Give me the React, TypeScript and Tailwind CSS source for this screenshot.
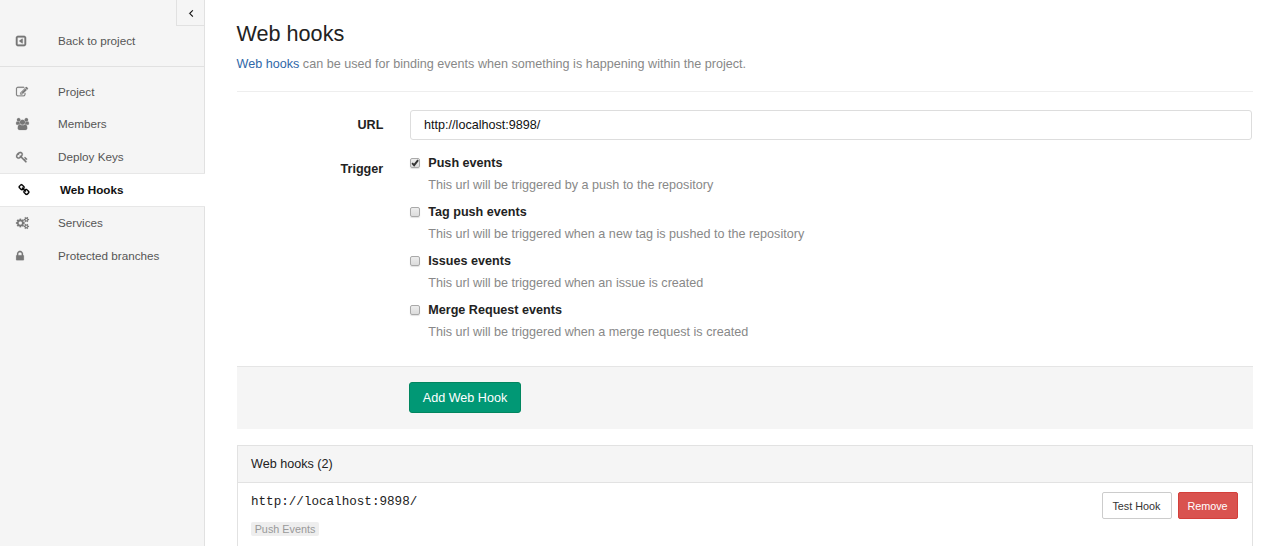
import React from 'react';

type IconProps = { d: string; wide?: boolean; className?: string };

function Icon({ d, wide, className = '' }: IconProps) {
  return (
    <svg
      viewBox={wide ? '0 0 1920 1792' : '0 0 1792 1792'}
      className={`h-[12px] shrink-0 overflow-visible ${wide ? 'w-[13px]' : 'w-[12px]'} ${className}`}
      fill="currentColor"
      stroke="currentColor"
      strokeWidth="30"
      aria-hidden="true"
    >
      <path d={d} />
    </svg>
  );
}

const backIcon =
  'M1152 608v576q0 26-19 45t-45 19q-20 0-37-12l-403-288q-27-19-27-52t27-52l403-288q17-12 37-12 26 0 45 19t19 45zM1408 1376v-960q0-13-9.500-22.500t-22.500-9.500h-960q-13 0-22.500 9.500t-9.500 22.500v960q0 13 9.500 22.500t22.500 9.500h960q13 0 22.500-9.500t9.500-22.500zm256-960v960q0 119-84.500 203.500t-203.500 84.500h-960q-119 0-203.500-84.500t-84.500-203.500v-960q0-119 84.500-203.500t203.500-84.500h960q119 0 203.500 84.500t84.500 203.500z';
const angleLeft =
  'M1203 544q0 13-10 23l-393 393 393 393q10 10 10 23t-10 23l-50 50q-10 10-23 10t-23-10l-466-466q-10-10-10-23t10-23l466-466q10-10 23-10t23 10l50 50q10 10 10 23z';
const editIcon =
  'M888 1184l116-116-152-152-116 116v56h96v96h56zm440-720q-16-16-33 1l-350 350q-17 17-1 33t33-1l350-350q17-17 1-33zm80 594v190q0 119-84.500 203.500t-203.500 84.500h-832q-119 0-203.500-84.500t-84.500-203.500v-832q0-119 84.500-203.500t203.500-84.500h832q63 0 117 25 15 7 18 23 3 17-9 29l-49 49q-14 14-32 8-23-6-45-6h-832q-66 0-113 47t-47 113v832q0 66 47 113t113 47h832q66 0 113-47t47-113v-126q0-13 9-22l64-64q15-15 35-7t20 29zm-96-738l288 288-672 672h-288v-288zm444 132l-92 92-288-288 92-92q28-28 68-28t68 28l152 152q28 28 28 68t-28 68z';
const usersIcon =
  'M593 896q-162 5-265 128h-134q-82 0-138-40.500t-56-118.500q0-353 124-353 6 0 43.500 21t97.500 42.500 119 21.500q67 0 133-23-5 37-5 66 0 139 81 256zm1071 637q0 120-73 189.500t-194 69.500h-874q-121 0-194-69.500t-73-189.500q0-53 3.500-103.500t14-109 26.500-108.500 43-97.500 62-81 85.500-53.500 111.500-20q10 0 43 21.500t73 48 107 48 135 21.500 135-21.500 107-48 73-48 43-21.500q61 0 111.500 20t85.500 53.500 62 81 43 97.500 26.500 108.500 14 109 3.500 103.500zm-1024-1277q0 106-75 181t-181 75-181-75-75-181 75-181 181-75 181 75 75 181zm704 384q0 159-112.500 271.500t-271.500 112.500-271.500-112.500-112.500-271.500 112.500-271.500 271.500-112.500 271.500 112.500 112.500 271.500zm576 225q0 78-56 118.500t-138 40.500h-134q-103-123-265-128 81-117 81-256 0-29-5-66 66 23 133 23 59 0 119-21.500t97.500-42.500 43.500-21q124 0 124 353zm-128-609q0 106-75 181t-181 75-181-75-75-181 75-181 181-75 181 75 75 181z';
const keyIcon =
  'M832 512q0-80-56-136t-136-56-136 56-56 136q0 42 19 83-41-19-83-19-80 0-136 56t-56 136 56 136 136 56 136-56 56-136q0-42-19-83 41 19 83 19 80 0 136-56t56-136zm851 704q0 17-49 66t-66 49q-9 0-28.500-16t-36.500-33-38.500-40-24.500-26l-96 96 220 220q28 28 28 68 0 42-39 81t-81 39q-40 0-68-28l-671-671q-176 131-365 131-163 0-265.500-102.500t-102.500-265.500q0-160 95-313t248-248 313-95q163 0 265.500 102.500t102.500 265.500q0 189-131 365l355 355 96-96q-3-3-26-24.500t-40-38.500-33-36.500-16-28.500q0-17 49-66t66-49q13 0 23 10 6 6 46 44.500t82 79.500 86.500 86 73 78 28.500 41z';
const linkIcon =
  'M1520 1216q0-40-28-68l-208-208q-28-28-68-28-42 0-72 32 3 3 19 18.500t21.500 21.500 15 19 13 25.500 3.500 27.500q0 40-28 68t-68 28q-15 0-27.500-3.500t-25.500-13-19-15-21.500-21.500-18.500-19q-33 31-33 73 0 40 28 68l206 207q27 27 68 27 40 0 68-26l147-146q28-28 28-67zm-703-705q0-40-28-68l-206-207q-28-28-68-28-39 0-68 27l-147 146q-28 28-28 67 0 40 28 68l208 208q27 27 68 27 42 0 72-31-3-3-19-18.500t-21.500-21.500-15-19-13-25.500-3.500-27.500q0-40 28-68t68-28q15 0 27.500 3.500t25.500 13 19 15 21.500 21.500 18.500 19q33-31 33-73zm895 705q0 120-85 203l-147 146q-83 83-203 83-121 0-204-85l-206-207q-83-83-83-203 0-123 88-209l-88-88q-86 88-208 88-120 0-204-84l-208-208q-84-84-84-204t85-203l147-146q83-83 203-83 121 0 204 85l206 207q83 83 83 203 0 123-88 209l88 88q86-88 208-88 120 0 204 84l208 208q84 84 84 204z';
const smallCog =
  'v140q0 16-149 31-12 27-30 52 51 113 51 138 0 4-4 7-122 71-124 71-8 0-46-47t-52-68q-20 2-30 2t-30-2q-14 21-52 68t-46 47q-2 0-124-71-4-3-4-7 0-25 51-138-18-25-30-52-149-15-149-31v-140q0-16 149-31 13-29 30-52-51-113-51-138 0-4 4-7 4-2 35-20t59-34 30-16q8 0 46 46.500t52 67.500q20-2 30-2t30 2q51-71 92-112l6-2q4 0 124 70 4 3 4 7 0 25-51 138 17 23 30 52 149 15 149 31z';
const cogsIcon =
  'M896 896q0-106-75-181t-181-75-181 75-75 181 75 181 181 75 181-75 75-181zm768 512q0-52-38-90t-90-38-90 38-38 90q0 53 37.500 90.500t90.500 37.500 90.500-37.500 37.500-90.500zm0-1024q0-52-38-90t-90-38-90 38-38 90q0 53 37.500 90.500t90.500 37.500 90.500-37.500 37.500-90.500zm-384 421v185q0 10-7 19.500t-16 10.500l-155 24q-11 35-32 76 34 48 90 115 7 11 7 20 0 12-7 19-23 30-82.500 89.500t-78.500 59.500q-11 0-21-7l-115-90q-37 19-77 31-11 108-23 155-7 24-30 24h-186q-11 0-20-7.500t-10-17.500l-23-153q-34-10-75-31l-118 89q-7 7-20 7-11 0-21-8-144-133-144-160 0-9 7-19 10-14 41-53t47-61q-23-44-35-82l-152-24q-10-1-17-9.500t-7-19.500v-185q0-10 7-19.500t16-10.500l155-24q11-35 32-76-34-48-90-115-7-11-7-20 0-12 7-20 22-30 82-89t79-59q11 0 21 7l115 90q34-18 77-32 11-108 23-154 7-24 30-24h186q11 0 20 7.500t10 17.500l23 153q34 10 75 31l118-89q8-7 20-7 11 0 21 8 144 133 144 160 0 8-7 19-12 16-42 54t-45 60q23 48 34 82l152 23q10 2 17 10.500t7 19.500z' +
  'M1920 1338' + smallCog + 'M1920 314' + smallCog;
const lockIcon =
  'M640 768h512v-192q0-106-75-181t-181-75-181 75-75 181v192zm832 96v576q0 40-28 68t-68 28h-960q-40 0-68-28t-28-68v-576q0-40 28-68t68-28h32v-192q0-184 132-316t316-132 316 132 132 316v192h32q40 0 68 28t28 68z';

const navItems = [
  { label: 'Project', d: editIcon },
  { label: 'Members', d: usersIcon, wide: true },
  { label: 'Deploy Keys', d: keyIcon },
  { label: 'Web Hooks', d: linkIcon, active: true },
  { label: 'Services', d: cogsIcon, wide: true },
  { label: 'Protected branches', d: lockIcon, shift: '-ml-[2px]' },
];

const triggers = [
  { name: 'Push events', text: 'This url will be triggered by a push to the repository', on: true },
  { name: 'Tag push events', text: 'This url will be triggered when a new tag is pushed to the repository' },
  { name: 'Issues events', text: 'This url will be triggered when an issue is created' },
  { name: 'Merge Request events', text: 'This url will be triggered when a merge request is created' },
];

function Checkbox({ on }: { on?: boolean }) {
  return (
    <span
      role="checkbox"
      aria-checked={!!on}
      className="mt-[4px] flex size-[10px] shrink-0 rounded-[2px] border border-[#a9a9a9] bg-linear-to-b from-[#ededed] to-[#dcdcdc] shadow-[0_1px_1px_rgba(0,0,0,0.12)]"
    >
      {on && (
        <svg viewBox="0 0 8 8" className="size-2" fill="none" stroke="#333" strokeWidth="1.9">
          <path d="M1.100 4.200 3.100 6.200 7.100 1.100" />
        </svg>
      )}
    </span>
  );
}

function Sidebar() {
  return (
    <aside className="flex w-[205px] shrink-0 flex-col border-r border-[#e1e1e1] bg-[#f5f5f5] text-[11.7px] text-[#555]">
      <div className="ml-auto flex h-[26px] w-[28px] items-center justify-center border-b border-l border-[#e1e1e1] pl-px text-black">
        <Icon d={angleLeft} />
      </div>
      <div className="flex h-[41px] items-start border-b border-[#e1e1e1] pl-[15px]">
        <div className="flex h-[30px] items-center">
          <div className="flex w-[43px] text-[#777]">
            <Icon d={backIcon} />
          </div>
          Back to project
        </div>
      </div>
      <nav className="pt-[8.8px]">
        {navItems.map((item) => (
          <div
            key={item.label}
            className={
              item.active
                ? '-mr-px flex h-[34px] items-center border-y border-[#e7e7e7] bg-white pl-[18px] font-bold text-[#111]'
                : 'flex h-[32.4px] items-center pl-4'
            }
          >
            <div className={item.active ? 'flex w-[42px] text-black' : 'flex w-[42px] text-[#777]'}>
              <Icon d={item.d} wide={item.wide} className={item.shift} />
            </div>
            {item.label}
          </div>
        ))}
      </nav>
    </aside>
  );
}

export default function App() {
  return (
    <div className="flex h-[546px] w-[1283px] overflow-hidden bg-white font-['Liberation_Sans',Arial,sans-serif] text-[12.6px] leading-[18px] text-[#222]">
      <Sidebar />
      <main className="ml-[31.6px] flex w-[1016.4px] flex-col">
        <h1 className="mt-[20px] text-[21.6px] leading-[28px] text-[#222]">Web hooks</h1>
        <p className="mt-[7px] text-[#888]">
          <span className="text-[#3067a8]">Web hooks</span> can be used for binding events when something is happening within the project.
        </p>
        <hr className="mt-[18px] border-[#eee]" />

        <div className="mt-[18px] flex items-center">
          <div className="w-[146.8px] text-right font-bold">URL</div>
          <div className="ml-[26.2px] mr-px flex h-[30px] flex-1 items-center rounded-[3px] border border-[#ddd] px-[13.5px] text-[#111]">
            http://localhost:9898/
          </div>
        </div>

        <div className="mt-[14px] flex items-start">
          <div className="w-[146.6px] pt-[6px] text-right font-bold">Trigger</div>
          <div className="ml-[26.8px] flex flex-col gap-[9px]">
            {triggers.map((t) => (
              <div key={t.name} className="flex items-start">
                <Checkbox on={t.on} />
                <div className="ml-[8.3px] flex flex-col gap-[4px]">
                  <b>{t.name}</b>
                  <span className="text-[#888]">{t.text}</span>
                </div>
              </div>
            ))}
          </div>
        </div>

        <div className="mt-[25px] h-[63px] border-t border-[#e5e5e5] bg-[#f5f5f5] pl-[172.4px] pt-[15px]">
          <button className="h-[31px] w-[112px] rounded-[3px] border border-[#01865f] bg-[#019875] text-white">Add Web Hook</button>
        </div>

        <section className="mt-4 flex min-h-[101px] flex-col border border-b-0 border-[#e2e2e2]">
          <h2 className="flex h-[37px] items-center border-b border-[#e2e2e2] bg-[#f5f5f5] px-[13.5px]">Web hooks (2)</h2>
          <div className="flex items-start justify-between pl-[13.4px] pr-[14px] pt-[9px]">
            <div className="flex flex-col items-start">
              <span className="mt-px font-['Liberation_Mono',monospace] text-[12.6px]">http://localhost:9898/</span>
              <span className="mt-[11px] h-[14px] rounded-[2px] bg-[#eee] px-[3.7px] text-[10.8px] leading-[15px] text-[#999]">Push Events</span>
            </div>
            <div className="flex gap-[6px] text-[10.8px]">
              <button className="h-[27px] w-[70px] rounded-[2px] border border-[#ccc] bg-white pr-px pt-px text-[#333]">Test Hook</button>
              <button className="h-[27px] w-[60px] rounded-[2px] border border-[#d43f3a] bg-[#d9534f] pr-px pt-px text-white">Remove</button>
            </div>
          </div>
        </section>
      </main>
    </div>
  );
}
